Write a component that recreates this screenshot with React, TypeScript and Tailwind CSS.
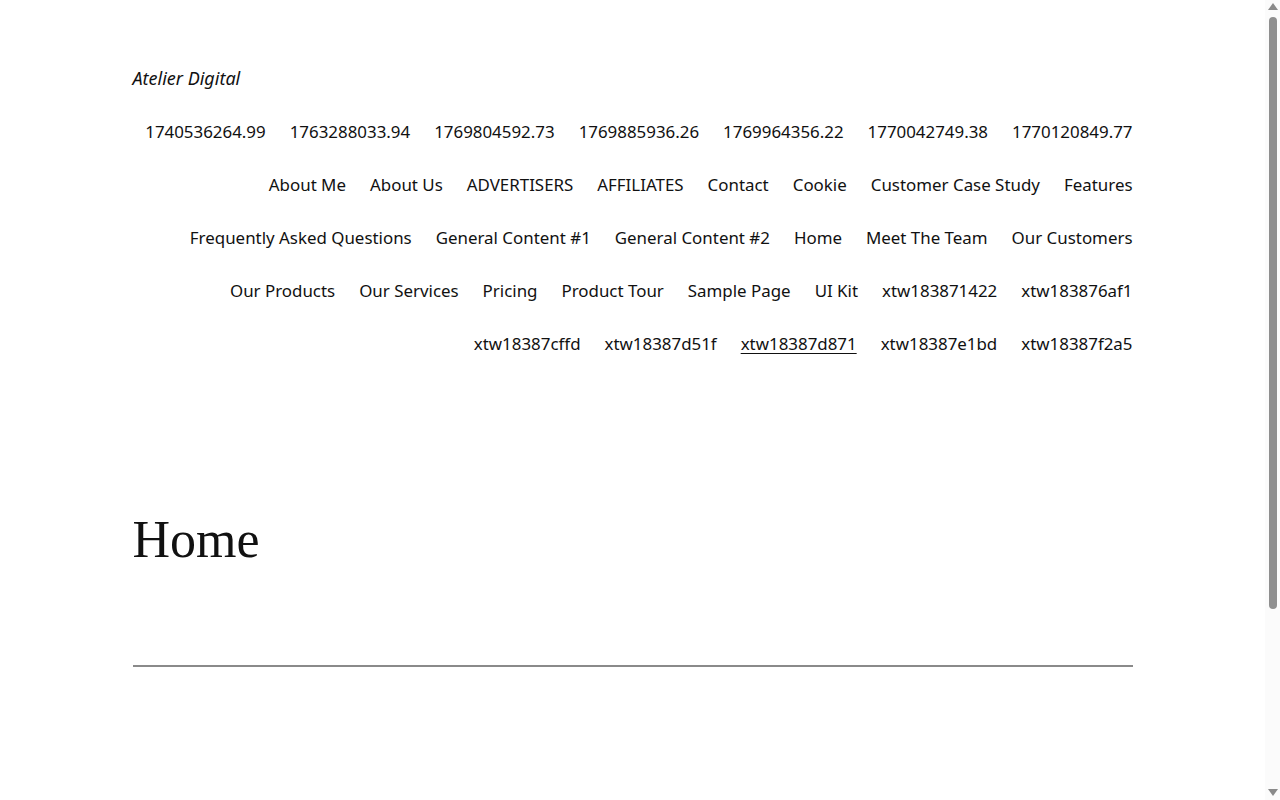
const rows = [
  "1740536264.99",
  "1763288033.94",
  "1769804592.73",
  "1769885936.26",
  "1769964356.22",
  "1770042749.38",
  "1770120849.77",
  "About Me",
  "About Us",
  "ADVERTISERS",
  "AFFILIATES",
  "Contact",
  "Cookie",
  "Customer Case Study",
  "Features",
  "Frequently Asked Questions",
  "General Content #1",
  "General Content #2",
  "Home",
  "Meet The Team",
  "Our Customers",
  "Our Products",
  "Our Services",
  "Pricing",
  "Product Tour",
  "Sample Page",
  "UI Kit",
  "xtw183871422",
  "xtw183876af1",
  "xtw18387cffd",
  "xtw18387d51f",
  "xtw18387d871",
  "xtw18387e1bd",
  "xtw18387f2a5",
];

const current = "xtw18387d871";

// classic window scrollbar, as in the screenshot
function Scrollbar() {
  return (
    <div aria-hidden className="fixed top-0 right-0 flex h-screen w-[15px] flex-col items-center bg-[#fbfbfb]">
      <svg width="10" height="7" viewBox="0 0 10 7" className="mt-[3px] shrink-0">
        <path d="M5 0 L10 7 H0 Z" fill="#8a8a8a" />
      </svg>
      <div className="mt-[7px] h-[592px] w-[8px] rounded-full bg-[#8f8f8f]" />
      <div className="grow" />
      <svg width="10" height="7" viewBox="0 0 10 7" className="mb-[4px] shrink-0">
        <path d="M0 0 H10 L5 7 Z" fill="#8a8a8a" />
      </svg>
    </div>
  );
}

export default function App() {
  return (
    <div className="min-h-[1060px] bg-white pr-[15px] text-[#111111] font-['Noto_Sans','Open_Sans',sans-serif]">
      <header className="mx-auto w-[1000px] pt-16">
        <div className="flex flex-wrap items-center justify-between gap-6">
          <p className="text-[18px] leading-[29px] italic">
            <a href="#">Atelier Digital</a>
          </p>
          <nav>
            <ul className="flex flex-wrap justify-end gap-6 text-[16.9px] leading-[29px]">
              {rows.map((label) => (
                <li key={label}>
                  <a
                    href="#"
                    className={label === current ? "underline underline-offset-[3px] decoration-1" : ""}
                  >
                    {label}
                  </a>
                </li>
              ))}
            </ul>
          </nav>
        </div>
      </header>

      <main className="mx-auto w-[1000px] pt-[151px]">
        <h1 className="font-['Liberation_Serif',serif] text-[52px] leading-[1.2] font-normal">
          Home
        </h1>
        <hr className="mt-[94px] border-0 border-t-2 border-[#8a8a8a]" />
      </main>

      <Scrollbar />
    </div>
  );
}
